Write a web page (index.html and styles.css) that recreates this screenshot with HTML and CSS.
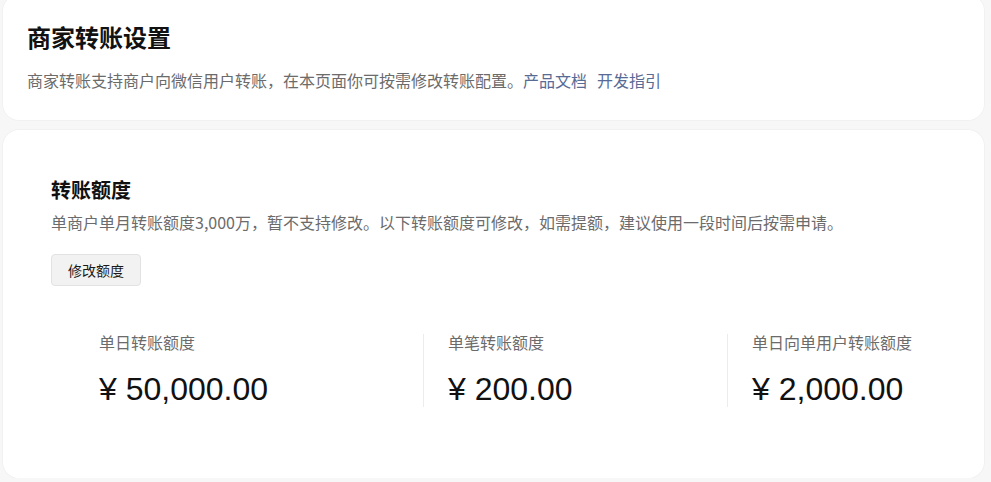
FILE: index.html
```html
<!DOCTYPE html>
<html lang="zh-CN">
<head>
<meta charset="utf-8">
<title>商家转账设置</title>
<link rel="stylesheet" href="styles.css">
</head>
<body>
<div class="page">
  <section class="card intro">
    <h1 class="page-title">商家转账设置</h1>
    <p class="page-desc">商家转账支持商户向微信用户转账，在本页面你可按需修改转账配置。<a class="link" href="#">产品文档</a><a class="link" href="#">开发指引</a></p>
  </section>
  <section class="card quota">
    <h2 class="section-title">转账额度</h2>
    <p class="section-desc">单商户单月转账额度3,000万，暂不支持修改。以下转账额度可修改，如需提额，建议使用一段时间后按需申请。</p>
    <button class="btn" type="button">修改额度</button>
    <div class="stats">
      <div class="stat">
        <div class="stat-label">单日转账额度</div>
        <div class="stat-value">¥ 50,000.00</div>
      </div>
      <div class="stat">
        <div class="stat-label">单笔转账额度</div>
        <div class="stat-value">¥ 200.00</div>
      </div>
      <div class="stat">
        <div class="stat-label">单日向单用户转账额度</div>
        <div class="stat-value">¥ 2,000.00</div>
      </div>
    </div>
  </section>
</div>
</body>
</html>
```

FILE: styles.css
```css
* { box-sizing: border-box; }
html, body {
  margin: 0;
  padding: 0;
  background: #f7f7f7;
  overflow: hidden;
}
body {
  font-family: "Noto Sans CJK SC", "Noto Sans", "Liberation Sans", sans-serif;
  color: #1a1a1a;
}
.page {
  display: flex;
  flex-direction: column;
  gap: 10px;
  padding: 0 7px 0 3px;
  margin-top: -5px;
}
.card {
  background: #fff;
  border-radius: 16px;
  box-shadow: 0 0 0 1px rgba(0,0,0,0.025);
}
.intro {
  padding: 26px 24px 28px;
}
.page-title {
  margin: 0;
  font-size: 24px;
  line-height: 32px;
  font-weight: 700;
  color: #111;
}
.page-desc {
  margin: 15px 0 0;
  font-size: 16px;
  line-height: 24px;
  color: #6b6b6b;
}
.link {
  color: #576b95;
  text-decoration: none;
}
.link + .link { margin-left: 10px; }

.quota {
  padding: 48px 48px 71px;
}
.section-title {
  margin: 0;
  font-size: 20px;
  line-height: 24px;
  font-weight: 700;
  color: #111;
}
.section-desc {
  margin: 8px 0 0;
  font-size: 16px;
  line-height: 24px;
  color: #6b6b6b;
}
.btn {
  margin-top: 20px;
  width: 90px;
  height: 32px;
  padding: 0;
  background: #f2f2f2;
  border: 1px solid #e2e2e2;
  border-radius: 4px;
  font-family: inherit;
  font-size: 14px;
  color: #1a1a1a;
  display: block;
}
.stats {
  margin: 48px 0 0 48px;
  display: grid;
  grid-template-columns: 324px 304px 1fr;
}
.stat {
  display: flex;
  flex-direction: column;
  gap: 21px;
}
.stat + .stat {
  border-left: 1px solid #ececec;
  padding-left: 24px;
}
.stat-label {
  font-size: 16px;
  line-height: 16px;
  color: #6b6b6b;
}
.stat-value {
  font-family: "Liberation Sans", Arial, sans-serif;
  font-size: 32px;
  line-height: 36px;
  color: #111;
}
```
